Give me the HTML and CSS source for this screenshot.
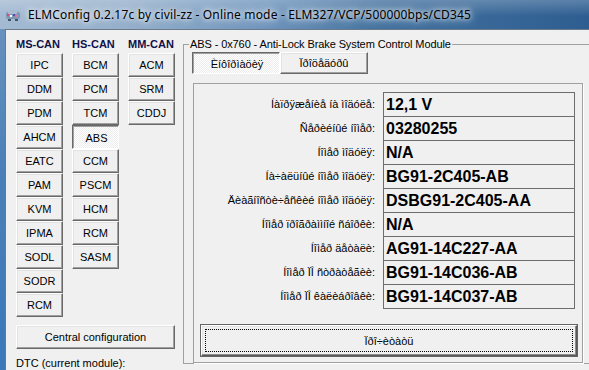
FILE: index.html
```html
<!DOCTYPE html>
<html lang="ru">
<head>
    <meta charset="UTF-8">
    <meta name="viewport" content="width=device-width, initial-scale=1.0">
    <title>ELMConfig</title>
    <link rel="stylesheet" href="styles.css">
</head>
<body>
    <div class="titlebar">
        <svg class="app-icon" viewBox="0 0 16 16" width="16" height="16">
            <rect x="1" y="5" width="14" height="7" rx="2" fill="#7f97b4"/>
            <rect x="3" y="3" width="9" height="4" rx="1" fill="#a9bbd0"/>
            <rect x="2" y="7" width="2" height="2" fill="#d04a8c"/>
            <rect x="5" y="8" width="2" height="2" fill="#ffffff"/>
            <rect x="8" y="7" width="2" height="2" fill="#5a4ab8"/>
            <rect x="11" y="8" width="2" height="2" fill="#e07aa8"/>
            <rect x="3" y="12" width="3" height="2" fill="#3f5470"/>
            <rect x="10" y="12" width="3" height="2" fill="#3f5470"/>
        </svg>
        <span class="title">ELMConfig 0.2.17c by civil-zz - Online mode - ELM327/VCP/500000bps/CD345</span>
    </div>
    <div class="client">
        <div class="modules">
            <div class="bus-row">
                <div class="bus">
                    <div class="bus-name">MS-CAN</div>
                    <button class="btn mod">IPC</button>
                    <button class="btn mod">DDM</button>
                    <button class="btn mod">PDM</button>
                    <button class="btn mod">AHCM</button>
                    <button class="btn mod">EATC</button>
                    <button class="btn mod">PAM</button>
                    <button class="btn mod">KVM</button>
                    <button class="btn mod">IPMA</button>
                    <button class="btn mod">SODL</button>
                    <button class="btn mod">SODR</button>
                    <button class="btn mod">RCM</button>
                </div>
                <div class="bus">
                    <div class="bus-name">HS-CAN</div>
                    <button class="btn mod">BCM</button>
                    <button class="btn mod">PCM</button>
                    <button class="btn mod">TCM</button>
                    <button class="btn mod down">ABS</button>
                    <button class="btn mod">CCM</button>
                    <button class="btn mod">PSCM</button>
                    <button class="btn mod">HCM</button>
                    <button class="btn mod">RCM</button>
                    <button class="btn mod">SASM</button>
                </div>
                <div class="bus">
                    <div class="bus-name">MM-CAN</div>
                    <button class="btn mod">ACM</button>
                    <button class="btn mod">SRM</button>
                    <button class="btn mod">CDDJ</button>
                </div>
            </div>
            <button class="btn wide-btn">Central configuration</button>
            <div class="dtc">DTC (current module):</div>
        </div>
        <fieldset class="module-box">
            <legend>ABS - 0x760 - Anti-Lock Brake System Control Module</legend>
            <div class="tabs">
                <button class="btn tab down">Èíôîðìàöèÿ</button>
                <button class="btn tab">Ïðîöåäóðû</button>
            </div>
            <div class="info-panel">
                <div class="info-grid">
                    <div class="info-row"><span class="info-label">Íàïðÿæåíèå íà ìîäóëå:</span><span class="info-value">12,1 V</span></div>
                    <div class="info-row"><span class="info-label">Ñåðèéíûé íîìåð:</span><span class="info-value">03280255</span></div>
                    <div class="info-row"><span class="info-label">Íîìåð ìîäóëÿ:</span><span class="info-value">N/A</span></div>
                    <div class="info-row"><span class="info-label">Íà÷àëüíûé íîìåð ìîäóëÿ:</span><span class="info-value">BG91-2C405-AB</span></div>
                    <div class="info-row"><span class="info-label">Äèàãíîñòè÷åñêèé íîìåð ìîäóëÿ:</span><span class="info-value">DSBG91-2C405-AA</span></div>
                    <div class="info-row"><span class="info-label">Íîìåð ïðîãðàììíîé ñáîðêè:</span><span class="info-value">N/A</span></div>
                    <div class="info-row"><span class="info-label">Íîìåð äåòàëè:</span><span class="info-value">AG91-14C227-AA</span></div>
                    <div class="info-row"><span class="info-label">Íîìåð ÏÎ ñòðàòåãèè:</span><span class="info-value">BG91-14C036-AB</span></div>
                    <div class="info-row"><span class="info-label">Íîìåð ÏÎ êàëèáðîâêè:</span><span class="info-value">BG91-14C037-AB</span></div>
                </div>
                <button class="btn read-btn"><span class="focus">Ïðî÷èòàòü</span></button>
            </div>
        </fieldset>
    </div>
</body>
</html>
```

FILE: styles.css
```css
* {
    box-sizing: border-box;
}
body {
    margin: 0;
    width: 589px;
    height: 370px;
    overflow: hidden;
    font-family: "Liberation Sans", Arial, sans-serif;
    font-size: 11px;
    color: #000;
    background: linear-gradient(180deg, #6d95bf 0%, #4b80b8 45%, #3a78b9 100%);
}
.titlebar {
    height: 29px;
    display: flex;
    align-items: center;
    gap: 7px;
    padding-left: 5px;
    background:
        linear-gradient(180deg, rgba(255, 255, 255, 0.22), rgba(255, 255, 255, 0) 55%),
        linear-gradient(90deg, #a3bad2 0%, #94afcb 22%, #6f95bd 45%, #42719f 65%, #2e5e91 100%);
}
.app-icon {
    flex: none;
}
.title {
    font-family: "Noto Sans", sans-serif;
    font-size: 12px;
    letter-spacing: 0.17px;
    white-space: nowrap;
    text-shadow:
        0 0 4px rgba(255, 255, 255, 0.9),
        0 0 8px rgba(255, 255, 255, 0.8),
        0 0 12px rgba(255, 255, 255, 0.7);
}
.client {
    margin-left: 5px;
    width: 620px;
    height: 341px;
    display: flex;
    align-items: flex-start;
    background: #f0f0f0;
    border-top: 1px solid #6b7a8b;
    border-left: 1px solid #6b7a8b;
}
.modules {
    flex: none;
    width: 177px;
    padding: 7px 0 0 10px;
}
.bus-row {
    display: flex;
    align-items: flex-start;
    gap: 9px;
}
.bus {
    width: 47px;
    display: flex;
    flex-direction: column;
}
.bus-name {
    height: 16px;
    line-height: 15px;
    font-weight: bold;
    color: #10104a;
    white-space: nowrap;
}
.btn {
    display: block;
    margin: 0;
    padding: 0;
    font: inherit;
    color: #000;
    background: #f0f0f0;
    border: 1px solid;
    border-color: #fff #696969 #696969 #fff;
    box-shadow: inset -1px -1px 0 #a0a0a0, inset 1px 1px 0 #e3e3e3;
}
.btn.down {
    border-color: #696969 #fff #fff #696969;
    box-shadow: inset 1px 1px 0 #a0a0a0;
    background: repeating-conic-gradient(#ececec 0 25%, #fff 0 50%) 0 0 / 2px 2px;
    padding: 2px 0 0 2px;
}
.mod {
    width: 47px;
    height: 24px;
}
.wide-btn {
    margin-top: 8px;
    width: 159px;
    height: 24px;
}
.dtc {
    margin-top: 7px;
    line-height: 14px;
}
.module-box {
    flex: none;
    width: 409px;
    margin: 8px 0 0 0;
    padding: 2px 8px 0 9px;
    border: 1px solid #a0a0a0;
    min-width: 0;
}
.module-box legend {
    margin-left: -4px;
    padding: 0 1px;
    line-height: 12px;
    letter-spacing: -0.1px;
}
.tabs {
    display: flex;
    margin-left: -1px;
}
.tab {
    width: 88px;
    height: 22px;
}
.info-panel {
    margin-top: 9px;
    width: 390px;
    border: 1px solid #a0a0a0;
    box-shadow: 1px 1px 0 #fff;
    padding: 8px 7px 6px 1px;
}
.info-row {
    display: flex;
    justify-content: flex-end;
    height: 24px;
}
.info-label {
    margin-right: 8px;
    line-height: 24px;
    white-space: nowrap;
}
.info-value {
    width: 192px;
    border: 1px solid #6d6d6d;
    border-bottom: none;
    padding-left: 2px;
    font-size: 16px;
    font-weight: bold;
    line-height: 23px;
    white-space: nowrap;
}
.info-row:last-child {
    height: 25px;
}
.info-row:last-child .info-value {
    border-bottom: 1px solid #6d6d6d;
}
.read-btn {
    margin: 16px 6px 0 6px;
    width: 376px;
    height: 31px;
    padding: 3px;
    border-color: #fff #5a5a5a #5a5a5a #fff;
    outline: 1px solid #646464;
    outline-offset: 0;
    box-shadow: inset -1px -1px 0 #8c8c8c, inset 1px 1px 0 #e3e3e3;
}
.read-btn .focus {
    display: flex;
    align-items: center;
    justify-content: center;
    height: 100%;
    border: 1px dotted #000;
}
```
